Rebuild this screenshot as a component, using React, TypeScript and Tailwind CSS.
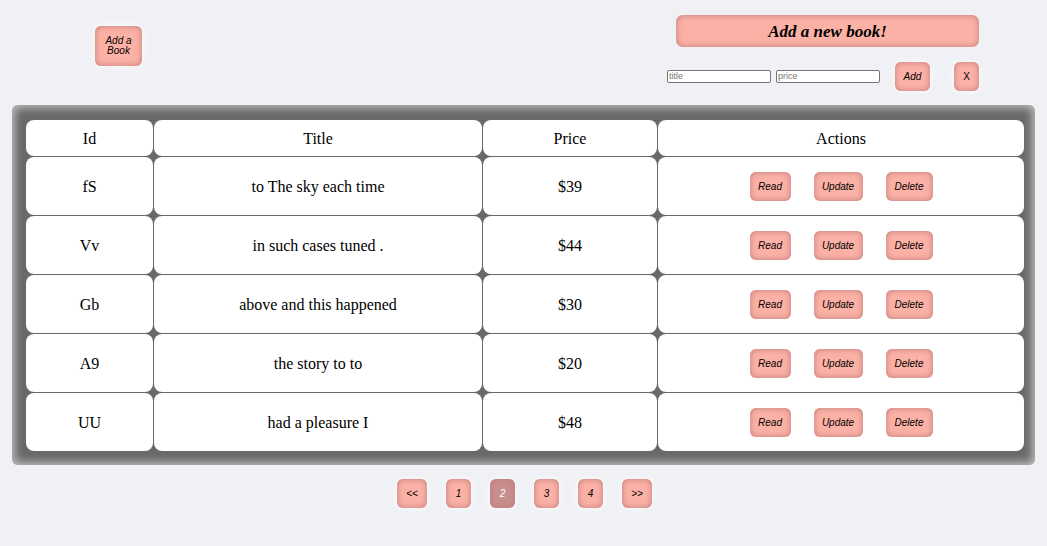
import React from "react";

const books = [
  { id: "fS", title: "to The sky each time", price: 39 },
  { id: "Vv", title: "in such cases tuned .", price: 44 },
  { id: "Gb", title: "above and this happened", price: 30 },
  { id: "A9", title: "the story to to", price: 20 },
  { id: "UU", title: "had a pleasure I", price: 48 },
];

const btn =
  "flex items-center justify-center rounded-[6px] italic text-[10px] shadow-[inset_0_0_6px_#bd7b78,0_0_6px_#ffffff] font-['Liberation_Sans',Arial,sans-serif]";

const pink = "bg-[#fcb1a6] text-black";

const cell =
  "flex items-center justify-center rounded-[8px] bg-white pt-[1px] text-[16px] text-black";

export default function App() {
  const pages = ["<<", "1", "2", "3", "4", ">>"];

  return (
    <div className="min-h-[546px] w-[1047px] bg-[#f0f1f5] font-['Liberation_Serif','Times_New_Roman',serif]">
      {/* TOP */}
      <div className="flex h-[105px]">
        <div className="pl-[95px] pt-[26px]">
          <button className={`${btn} ${pink} h-[40px] w-[47px] px-1 text-[9px] leading-[10px]`}>
            Add a Book
          </button>
        </div>

        <div className="ml-auto mr-[68px] flex flex-col items-end pt-[15px]">
          <div className="flex h-[32px] w-[303px] items-center justify-center rounded-[7px] bg-[#fcb1a6] pt-[1px] text-[17px] font-bold italic shadow-[inset_0_0_6px_#bd7b78]">
            Add a new book!
          </div>

          <div className="mt-[15px] flex items-center">
            <input
              placeholder="title"
              className="h-[13px] w-[104px] rounded-[2px] border border-[#767676] bg-white px-[1px] text-[9px] font-['Liberation_Sans',Arial,sans-serif] placeholder:text-[#757575]"
            />
            <input
              placeholder="price"
              className="ml-[5px] h-[13px] w-[104px] rounded-[2px] border border-[#767676] bg-white px-[1px] text-[9px] font-['Liberation_Sans',Arial,sans-serif] placeholder:text-[#757575]"
            />
            <button className={`${btn} ${pink} ml-[15px] h-[29px] w-[35px] text-[9px]`}>
              Add
            </button>
            <button className={`${btn} ${pink} ml-[24px] h-[29px] w-[25px] not-italic`}>
              X
            </button>
          </div>
        </div>
      </div>

      {/* TABLE */}
      <div className="mx-[12px] rounded-[6px] bg-[#6b6869] pb-[14px] pl-[14px] pr-[13px] pt-[15px] shadow-[inset_0_0_9px_3px_rgba(255,255,255,0.55)]">
        <div className="grid grid-cols-[127px_328px_174px_366px] grid-rows-[36px_repeat(5,58px)] gap-px">
          <div className={cell}>Id</div>
          <div className={cell}>Title</div>
          <div className={cell}>Price</div>
          <div className={cell}>Actions</div>

          {books.map((b) => (
            <React.Fragment key={b.id}>
              <div className={cell}>{b.id}</div>
              <div className={cell}>{b.title}</div>
              <div className={cell}>${b.price}</div>
              <div className={`${cell} gap-[23px]`}>
                <button className={`${btn} ${pink} h-[29px] w-[41px] text-[9px]`}>Read</button>
                <button className={`${btn} ${pink} h-[29px] w-[49px] text-[9px]`}>Update</button>
                <button className={`${btn} ${pink} h-[29px] w-[47px] text-[9px]`}>Delete</button>
              </div>
            </React.Fragment>
          ))}
        </div>
      </div>

      {/* PAGINATION */}
      <div className="mt-[14px] flex justify-center gap-[19px] pl-[2px]">
        {pages.map((p) => (
          <button
            key={p}
            className={`${btn} h-[29px] text-[9px] ${
              p.length > 1 ? "w-[30px]" : "w-[25px]"
            } ${p === "2" ? "bg-[#c98e8e] text-white" : pink}`}
          >
            {p}
          </button>
        ))}
      </div>
    </div>
  );
}
